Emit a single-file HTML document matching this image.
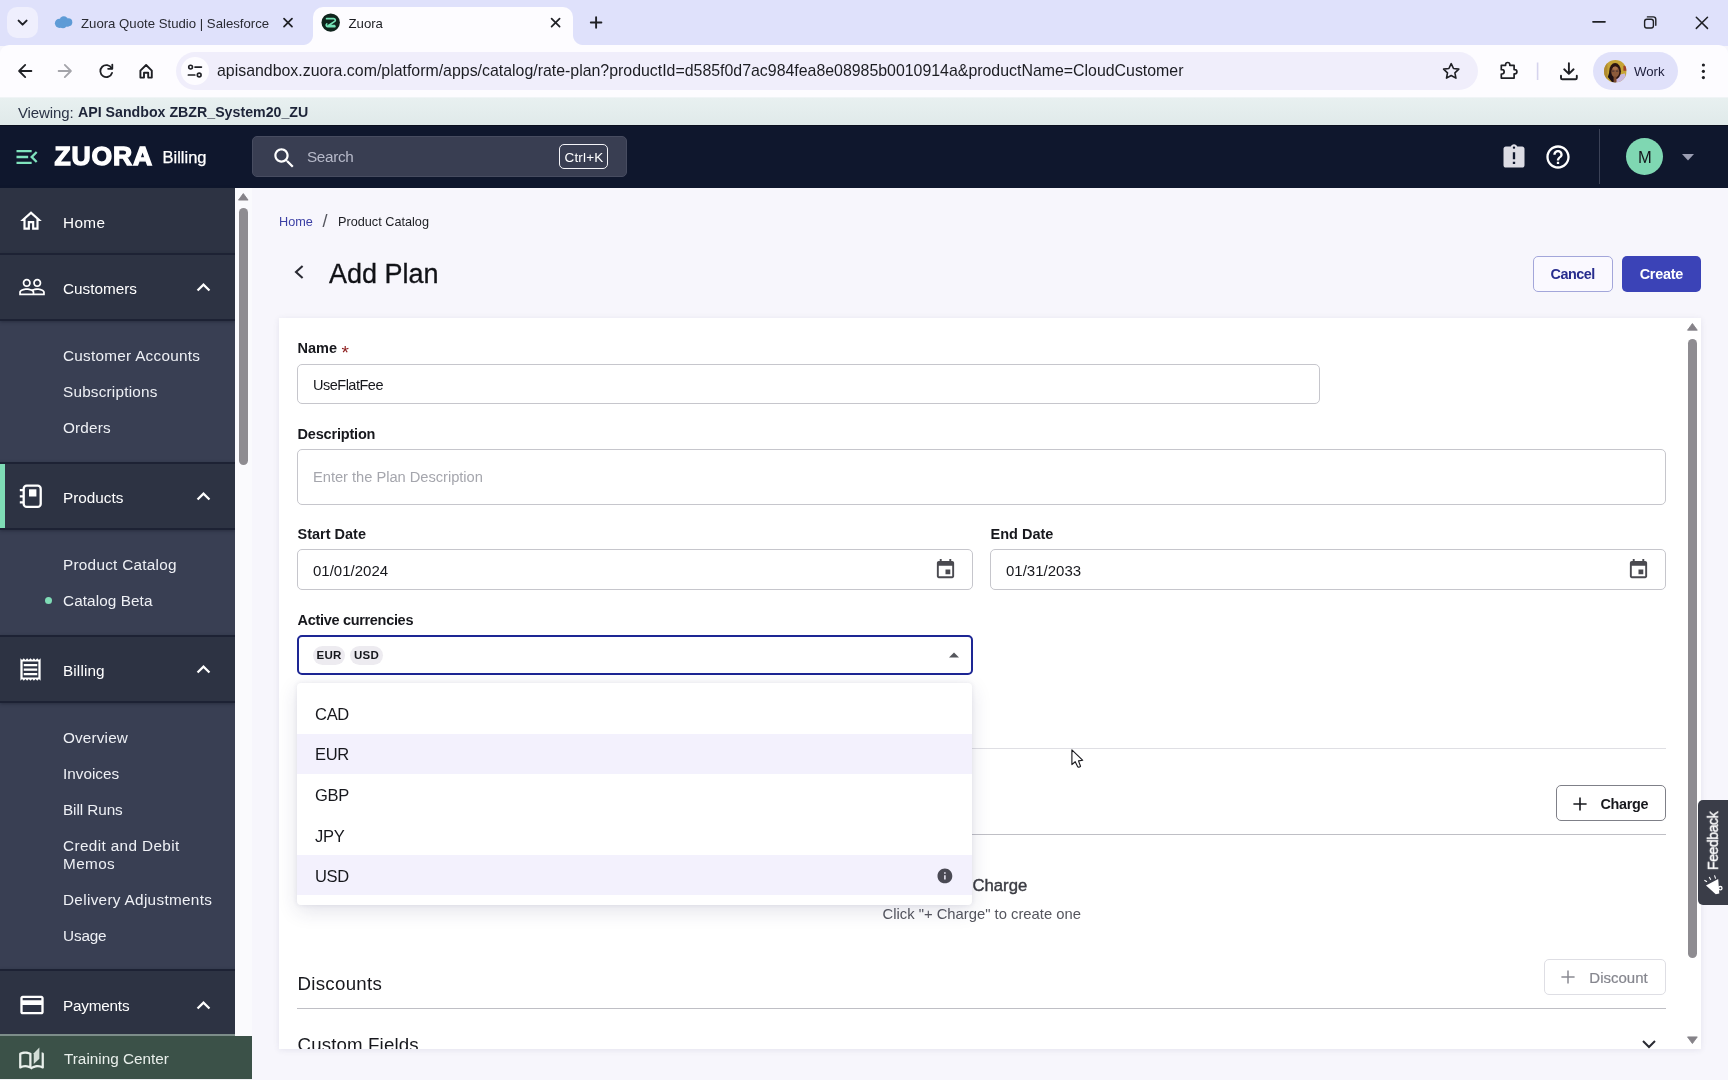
<!DOCTYPE html>
<html lang="en">
<head>
<meta charset="utf-8">
<title>Zuora</title>
<style>
*{box-sizing:border-box;margin:0;padding:0}
html,body{width:1728px;height:1080px;overflow:hidden}
body{position:relative;background:#f7f6fc;will-change:transform;font-family:"Liberation Sans","DejaVu Sans",sans-serif;color:#14151a;font-size:15px}
.abs{position:absolute}
.t{position:absolute;white-space:nowrap;line-height:1}
svg{position:absolute;overflow:visible}
.ic{fill:none;stroke:#1f2025;stroke-width:1.8;stroke-linecap:round;stroke-linejoin:round}
/* ---------- browser chrome ---------- */
#tabbar{left:0;top:0;width:1728px;height:46px;background:#dfe1fb}
#tabsearch{left:7px;top:7px;width:31px;height:31px;border-radius:10px;background:#efeffd}
#tab2{left:313px;top:7px;width:260px;height:39px;background:#fdfcff;border-radius:10px 10px 0 0}
#tab2:before,#tab2:after{content:"";position:absolute;bottom:1px;width:10px;height:10px}
#tab2:before{left:-10px;background:radial-gradient(circle at 0 0,rgba(253,252,255,0) 9.5px,#fdfcff 10.5px)}
#tab2:after{right:-10px;background:radial-gradient(circle at 100% 0,rgba(253,252,255,0) 9.5px,#fdfcff 10.5px)}
#toolbar{left:0;top:45px;width:1728px;height:53px;background:#fdfcff;border-radius:9px 9px 0 0}
#urlbar{left:176px;top:52px;width:1302px;height:38px;border-radius:19px;background:#f0eefb}
#sitechip{left:181px;top:57px;width:28px;height:28px;border-radius:14px;background:#fdfcff}
#profile{left:1593px;top:52px;width:85px;height:38px;border-radius:19px;background:#e0e1fa}
#pavatar{left:1604px;top:60px;width:23px;height:23px;border-radius:50%;background:radial-gradient(circle at 45% 55%,#5a3424 0,#6a4128 28%,#8a5a2c 45%,#b08a3a 62%,#caa648 78%,#7a5a30 100%)}
#viewbar{left:0;top:97px;width:1728px;height:28px;background:linear-gradient(180deg,#e8f0f0 0,#e0eaea 100%);border-top:1px solid #f0f4f6}
/* ---------- app header ---------- */
#hdr{left:0;top:125px;width:1728px;height:63px;background:#0f172d;border-top:1px solid #0a0f1e}
#search{left:252px;top:136px;width:375px;height:41px;border-radius:5px;background:#393e52;border:1px solid #474c60}
#kbd{left:559px;top:144px;width:49px;height:25px;border:1.5px solid #f4f4f8;border-radius:5px}
#hsep{left:1599px;top:129px;width:1px;height:55px;background:#3b4257}
#avatar{left:1626px;top:138px;width:37px;height:37px;border-radius:50%;background:#7fd7b2}
/* ---------- sidebar ---------- */
#side{left:0;top:188px;width:235px;height:892px;background:#393f53}
.sec{position:absolute;left:0;width:235px;background:#2d3343;border-top:2px solid #1d2234;border-bottom:2px solid #1d2234;box-shadow:0 1px 3px rgba(28,33,50,.55)}
.st{color:#fff;font-size:15.3px;left:63px;margin-top:1px}
.si{color:#eef0f5;font-size:15.3px;left:63px;margin-top:1px}
.wi{fill:#fff}
#train{left:0;top:1034px;width:252px;height:45.500px;background:#3b5148;border-top:2px solid #7d8d8a}
/* ---------- main ---------- */
#sbtrack{left:235px;top:188px;width:17px;height:848px;background:#fafafd}
#card{left:279px;top:318px;width:1422px;height:731px;background:#fff;box-shadow:0 1px 6px rgba(70,70,120,.11)}
.lbl{font-weight:bold;font-size:14.5px;color:#17181d}
.inp{position:absolute;border:1px solid #c6c6cc;border-radius:5px;background:#fff}
.val{font-size:15px;color:#17181d}
.hr{position:absolute;height:1px;background:#bfbfc5}
#dd{left:297px;top:683px;width:675px;height:222px;border-radius:4px;background:#fff;box-shadow:0 6px 20px rgba(40,40,90,.13),0 0 5px rgba(40,40,90,.09)}
.opt{position:absolute;left:0;width:675px;height:40px}
.opt.sel{background:#f3f1fd}
.ot{font-size:16.5px;left:18px;color:#17181d;letter-spacing:-.3px}
.chip{position:absolute;height:19px;border-radius:9.5px;background:#edebf0;font-weight:bold;font-size:11.5px;line-height:19.5px;text-align:center;color:#17181d;letter-spacing:.2px}
.btn{position:absolute;border-radius:5px}
#t_view{letter-spacing:-0.12px}#t_logo{letter-spacing:0.88px}#t_search{letter-spacing:-0.34px}#t_kbd{letter-spacing:0.18px}#s_home{letter-spacing:0.37px}#s_ca{letter-spacing:0.27px}#s_sub{letter-spacing:0.21px}#s_ord{letter-spacing:0.16px}#s_pc{letter-spacing:0.27px}#s_cb{letter-spacing:0.09px}#s_bill{letter-spacing:0.13px}#s_ov{letter-spacing:0.16px}#s_br{letter-spacing:-0.08px}#s_cd{letter-spacing:0.38px}#s_mem{letter-spacing:0.39px}#s_da{letter-spacing:0.32px}#s_us{letter-spacing:-0.16px}#s_pay{letter-spacing:-0.21px}#bt_cancel{letter-spacing:-0.50px}#bt_create{letter-spacing:-0.25px}#v_name{letter-spacing:-0.50px}#l_desc{letter-spacing:-0.18px}#v_desc{letter-spacing:-0.03px}#l_cur{letter-spacing:-0.31px}#bt_charge{letter-spacing:-0.33px}#h_disc{letter-spacing:0.28px}#h_cf{letter-spacing:0.14px}#o_cad{letter-spacing:-0.28px}
</style>
</head>
<body>
<!-- ================= browser chrome ================= -->
<div id="tabbar" class="abs"></div>
<div id="tabsearch" class="abs"></div>
<div id="tab2" class="abs"></div>
<div id="toolbar" class="abs"></div>
<div id="urlbar" class="abs"></div>
<div id="sitechip" class="abs"></div>
<div id="profile" class="abs"></div>
<svg width="22.6" height="22.6" viewBox="0 0 22.6 22.6" style="left:1604px;top:59.7px"><defs><clipPath id="pc"><circle cx="11.3" cy="11.3" r="11.3"/></clipPath></defs><g clip-path="url(#pc)"><rect width="22.6" height="22.6" fill="#c6a436"/><rect x="0" y="3" width="3.4" height="16" fill="#b08a30"/><rect x="19.4" y="5.8" width="3.2" height="5" fill="#a0402a"/><path d="M12 15.2L21 13.5 22.6 22.6H11z" fill="#c7b7e0"/><ellipse cx="11.1" cy="11.2" rx="5.9" ry="8.2" fill="#2b1512"/><path d="M5.4 12L3.8 17l4.6 5.6h3.400V14z" fill="#1d1014"/><ellipse cx="11.3" cy="11.900" rx="4" ry="5.300" fill="#8c5a3b"/><ellipse cx="11.200" cy="8.300" rx="2.600" ry="1.800" fill="#a9724c"/><rect x="9.600" y="16.500" width="2.900" height="6" fill="#7c4b30"/><path d="M8 11.100h2.400M12 11.100h2.400" stroke="#3a2a30" stroke-width=".9"/></g></svg>
<div id="viewbar" class="abs"></div>
<svg width="1728" height="100" viewBox="0 0 1728 100" style="left:0;top:0">
  <!-- tab search chevron -->
  <path class="ic" style="stroke-width:2" d="M18.6 20.6l4 4 4-4"/>
  <!-- salesforce cloud -->
  <g fill="#5e9bd6"><circle cx="59.5" cy="23.3" r="4.6"/><circle cx="63.8" cy="20.6" r="4.3"/><circle cx="68.3" cy="22.2" r="4"/><circle cx="63" cy="24.6" r="3.6"/><circle cx="67" cy="23.6" r="3.2"/></g>
  <!-- tab close buttons -->
  <path class="ic" style="stroke-width:1.7" d="M284 18.6l8 8m0-8l-8 8"/>
  <path class="ic" style="stroke-width:1.7" d="M551.6 18.6l8 8m0-8l-8 8"/>
  <!-- zuora favicon -->
  <circle cx="330.7" cy="22.6" r="9.2" fill="#10241d"/>
  <path d="M326.6 18.7h7.2a1.5 1.5 0 0 1 .9 2.7l-6.6 4.3a0 0 0 0 0 0 0h6.5" fill="none" stroke="#74e3b7" stroke-width="1.7" stroke-linecap="round" stroke-linejoin="round"/>
  <path d="M334.9 26.6h-7.3a1.5 1.5 0 0 1-.8-2.7" fill="none" stroke="#74e3b7" stroke-width="1.7" stroke-linecap="round"/>
  <!-- new tab plus -->
  <path class="ic" style="stroke-width:1.9" d="M590.8 22.5h10.6m-5.3-5.3v10.6"/>
  <!-- window controls -->
  <path class="ic" style="stroke-width:1.7" d="M1593 21.8h12"/>
  <rect class="ic" style="stroke-width:1.4" x="1644.6" y="19.2" width="8.8" height="8.8" rx="2.2"/>
  <path class="ic" style="stroke-width:1.4" d="M1647.4 16.9h5.8a2.6 2.6 0 0 1 2.6 2.6v5.8"/>
  <path class="ic" style="stroke-width:1.5" d="M1696.3 17.2l11.2 11.2m0-11.2l-11.2 11.2"/>
  <!-- back / forward -->
  <path class="ic" d="M31.4 71H19.2m6-6.1l-6.1 6.1 6.1 6.1"/>
  <path class="ic" style="stroke:#a4a4aa" d="M58.6 71h12.2m-6-6.1l6.1 6.1-6.1 6.1"/>
  <!-- reload -->
  <path class="ic" d="M111.6 68.2a6 6 0 1 0 .5 4.6"/>
  <path class="ic" d="M112.3 64.6v4.2h-4.2"/>
  <!-- home -->
  <path class="ic" style="stroke-width:1.9" d="M140.4 70.6l5.7-5.6 5.7 5.6v7h-3.6v-4.9h-4.2v4.9h-3.6z"/>
  <!-- tune icon -->
  <circle class="ic" style="stroke-width:1.6" cx="190.6" cy="67.1" r="1.9"/><path class="ic" style="stroke-width:1.7" d="M195 67.1h6.4"/>
  <circle class="ic" style="stroke-width:1.6" cx="199.2" cy="75" r="1.9"/><path class="ic" style="stroke-width:1.7" d="M188.4 75h6.4"/>
  <!-- star -->
  <path class="ic" style="stroke-width:1.6" d="M1451.2 63.6l2.3 4.9 5.3.6-3.9 3.7 1 5.3-4.7-2.6-4.7 2.6 1-5.3-3.9-3.7 5.3-.6z"/>
  <!-- extension puzzle -->
  <path class="ic" style="stroke-width:1.7" d="M1501.3 65.300h4.300v-.700a2.100 2.100 0 0 1 4.200 0v.700h4.300v4.300h.700a2.100 2.100 0 0 1 0 4.200h-.700v4.300h-12.800v-4.100h.700a2.150 2.150 0 0 0 0-4.300h-.700z"/>
  <path d="M1537.600 62.500v17.500" stroke="#d6d4ee" stroke-width="1.6" fill="none"/>
  <!-- download -->
  <path class="ic" style="stroke-width:1.9" d="M1568.900 63.200v10.600m-4.700-4.500l4.700 4.600 4.700-4.600M1561 75.800v2.200a1.300 1.300 0 0 0 1.300 1.300h13.200a1.300 1.300 0 0 0 1.300-1.300v-2.200"/>
  <!-- menu dots -->
  <g fill="#1f2025"><circle cx="1703.400" cy="65" r="1.600"/><circle cx="1703.400" cy="71.300" r="1.600"/><circle cx="1703.400" cy="77.600" r="1.600"/></g>
</svg>
<span class="t" id="t_tab1" style="left:81px;top:17px;font-size:13.2px;color:#2a2b33">Zuora Quote Studio | Salesforce</span>
<span class="t" id="t_tab2" style="left:348.5px;top:17px;font-size:13.2px;color:#1c1d22">Zuora</span>
<span class="t" id="t_url" style="left:217px;top:63.3px;font-size:15.9px;color:#1c1d22">apisandbox.zuora.com/platform/apps/catalog/rate-plan?productId=d585f0d7ac984fea8e08985b0010914a&amp;productName=CloudCustomer</span>
<span class="t" id="t_work" style="left:1634px;top:64.5px;font-size:13.2px;color:#1c1d3a">Work</span>
<span class="t" id="t_view" style="left:18px;top:105px;font-size:15px;color:#2b3346">Viewing:</span>
<span class="t" id="t_viewb" style="left:78px;top:105px;font-size:14.2px;font-weight:bold;color:#1d2438">API Sandbox ZBZR_System20_ZU</span>

<!-- ================= app header ================= -->
<div id="hdr" class="abs"></div>
<div id="search" class="abs"></div>
<div id="kbd" class="abs"></div>
<div id="hsep" class="abs"></div>
<div id="avatar" class="abs"></div>
<svg width="28" height="28" viewBox="0 0 24 24" style="left:13.2px;top:143px"><path fill="#7fe3bd" d="M3 18h13v-2H3v2zm0-5h10v-2H3v2zm0-7v2h13V6H3zm18 9.59L17.42 12 21 8.41 19.59 7l-5 5 5 5L21 15.590z"/></svg>
<svg width="26.500" height="26.500" viewBox="0 0 24 24" style="left:271px;top:144.700px"><path class="wi" d="M15.500 14h-.79l-.28-.27C15.410 12.590 16 11.110 16 9.500 16 5.910 13.090 3 9.500 3S3 5.910 3 9.500 5.910 16 9.500 16c1.610 0 3.090-.59 4.230-1.570l.27.28v.79l5 4.990L20.490 19l-4.990-5zm-6 0C7.010 14 5 11.990 5 9.500S7.010 5 9.500 5 14 7.010 14 9.500 11.990 14 9.500 14z"/></svg>
<svg width="28" height="28" viewBox="0 0 24 24" style="left:1499.500px;top:142.500px"><path fill="#dcdce4" d="M19 3h-4.180C14.400 1.840 13.300 1 12 1c-1.300 0-2.400.84-2.820 2H5c-1.100 0-2 .9-2 2v14c0 1.100.9 2 2 2h14c1.100 0 2-.9 2-2V5c0-1.100-.9-2-2-2zm-6 15h-2v-2h2v2zm0-4h-2V8h2v6zm-1-9c-.55 0-1-.45-1-1s.45-1 1-1 1 .45 1 1-.45 1-1 1z"/></svg>
<svg width="28" height="28" viewBox="0 0 24 24" style="left:1544.400px;top:142.600px"><path class="wi" d="M11 18h2v-2h-2v2zm1-16C6.480 2 2 6.480 2 12s4.480 10 10 10 10-4.480 10-10S17.520 2 12 2zm0 18c-4.410 0-8-3.590-8-8s3.590-8 8-8 8 3.590 8 8-3.590 8-8 8zm0-14c-2.210 0-4 1.790-4 4h2c0-1.100.9-2 2-2s2 .9 2 2c0 2-3 1.750-3 5h2c0-2.250 3-2.500 3-5 0-2.210-1.790-4-4-4z"/></svg>
<svg width="12" height="7" viewBox="0 0 12 7" style="left:1681.600px;top:153.600px"><path fill="#9b9eb2" d="M0 0h12L6 6.600z"/></svg>
<span class="t" id="t_logo" style="left:54.500px;top:143px;font-size:26.500px;font-weight:bold;color:#fff;-webkit-text-stroke:1.350px #fff">ZUORA</span>
<span class="t" id="t_bill" style="left:162.500px;top:149px;font-size:16.500px;color:#fff;-webkit-text-stroke:.25px #fff">Billing</span>
<span class="t" id="t_search" style="left:307px;top:148.600px;font-size:15.3px;color:#b6b9c9">Search</span>
<span class="t" id="t_kbd" style="left:564.500px;top:151px;font-size:13.500px;color:#fff">Ctrl+K</span>
<span class="t" id="t_m" style="left:1638px;top:149px;font-size:16.500px;color:#14151a">M</span>

<!-- ================= sidebar ================= -->
<div id="side" class="abs"></div>
<div class="sec" style="top:188px;height:67px;border-top:0"></div>
<div class="sec" style="top:253px;height:68px"></div>
<div class="sec" style="top:462px;height:68px"></div>
<div class="sec" style="top:635px;height:68px"></div>
<div class="sec" style="top:969px;height:68px;border-bottom:0"></div>
<div class="abs" style="left:0;top:464px;width:4.500px;height:64px;background:#7fdcb6"></div>
<!-- sidebar icons -->
<svg width="26" height="26" viewBox="0 0 24 24" style="left:18.400px;top:208.400px"><path class="wi" d="M12 5.690l5 4.500V18h-2v-6H9v6H7v-7.810l5-4.500M12 3L2 12h3v8h6v-6h2v6h6v-8h3L12 3z"/></svg>
<svg width="28" height="28" viewBox="0 0 24 24" style="left:17.600px;top:273.200px"><path class="wi" d="M16.500 13c-1.200 0-3.070.34-4.500 1-1.430-.67-3.300-1-4.500-1C5.330 13 1 14.080 1 16.250V19h22v-2.750c0-2.170-4.330-3.250-6.500-3.250zm-4 4.500h-10v-1.250c0-.54 2.560-1.750 5-1.750s5 1.210 5 1.750v1.250zm9 0H14v-1.250c0-.46-.2-.86-.52-1.220.88-.3 1.960-.53 3.020-.53 2.440 0 5 1.210 5 1.750v1.250zM7.500 12c1.930 0 3.500-1.570 3.500-3.500S9.430 5 7.500 5 4 6.570 4 8.500 5.570 12 7.500 12zm0-5.500c1.100 0 2 .9 2 2s-.9 2-2 2-2-.9-2-2 .9-2 2-2zm9 5.500c1.930 0 3.500-1.570 3.500-3.500S18.430 5 16.500 5 13 6.570 13 8.500s1.570 3.500 3.500 3.500zm0-5.500c1.100 0 2 .9 2 2s-.9 2-2 2-2-.9-2-2 .9-2 2-2z"/></svg>
<svg width="26" height="28" viewBox="0 0 26 28" style="left:18px;top:482px"><rect x="5.700" y="3.700" width="17" height="21.200" rx="3" fill="none" stroke="#fff" stroke-width="2.300"/><rect x="11" y="7.300" width="7.400" height="7.200" fill="#fff"/><path d="M1.800 8.200h3.200M1.800 14.300h3.200M1.800 20.400h3.200" stroke="#fff" stroke-width="2.300" fill="none"/></svg>
<svg width="27" height="27" viewBox="0 0 24 24" style="left:17.300px;top:656.200px"><path class="wi" d="M19.500 3.500L18 2l-1.500 1.500L15 2l-1.500 1.500L12 2l-1.500 1.500L9 2 7.500 3.500 6 2 4.500 3.500 3 2v20l1.500-1.500L6 22l1.500-1.500L9 22l1.500-1.500L12 22l1.500-1.500L15 22l1.500-1.500L18 22l1.500-1.500L21 22V2l-1.500 1.500zM19 19.090H5V4.910h14v14.180zM6 15h12v2H6zm0-4h12v2H6zm0-4h12v2H6z"/></svg>
<svg width="28" height="28" viewBox="0 0 24 24" style="left:17.500px;top:991.300px"><path class="wi" d="M20 4H4c-1.110 0-1.990.89-1.990 2L2 18c0 1.110.89 2 2 2h16c1.110 0 2-.89 2-2V6c0-1.110-.89-2-2-2zm0 14H4v-6h16v6zm0-10H4V6h16v2z"/></svg>
<!-- chevrons -->
<svg width="27" height="27" viewBox="0 0 24 24" style="left:190.200px;top:274px"><path class="wi" d="M12 8l-6 6 1.410 1.410L12 10.830l4.590 4.580L18 14z"/></svg>
<svg width="27" height="27" viewBox="0 0 24 24" style="left:190.200px;top:483px"><path class="wi" d="M12 8l-6 6 1.410 1.410L12 10.830l4.590 4.580L18 14z"/></svg>
<svg width="27" height="27" viewBox="0 0 24 24" style="left:190.200px;top:656px"><path class="wi" d="M12 8l-6 6 1.410 1.410L12 10.830l4.590 4.580L18 14z"/></svg>
<svg width="27" height="27" viewBox="0 0 24 24" style="left:190.200px;top:992px"><path class="wi" d="M12 8l-6 6 1.410 1.410L12 10.830l4.590 4.580L18 14z"/></svg>
<span class="t st" id="s_home" style="top:214px">Home</span>
<span class="t st" id="s_cust" style="top:279.500px">Customers</span>
<span class="t si" id="s_ca" style="top:347px">Customer Accounts</span>
<span class="t si" id="s_sub" style="top:383px">Subscriptions</span>
<span class="t si" id="s_ord" style="top:419px">Orders</span>
<span class="t st" id="s_prod" style="top:488.500px">Products</span>
<span class="t si" id="s_pc" style="top:556px">Product Catalog</span>
<span class="t si" id="s_cb" style="top:592px">Catalog Beta</span>
<div class="abs" style="left:44.700px;top:597px;width:7px;height:7px;border-radius:50%;background:#7fdcb6"></div>
<span class="t st" id="s_bill" style="top:661.500px">Billing</span>
<span class="t si" id="s_ov" style="top:729px">Overview</span>
<span class="t si" id="s_inv" style="top:765px">Invoices</span>
<span class="t si" id="s_br" style="top:801px">Bill Runs</span>
<span class="t si" id="s_cd" style="top:837px">Credit and Debit</span>
<span class="t si" id="s_mem" style="top:855px">Memos</span>
<span class="t si" id="s_da" style="top:891px">Delivery Adjustments</span>
<span class="t si" id="s_us" style="top:927px">Usage</span>
<span class="t st" id="s_pay" style="top:997px">Payments</span>
<div id="train" class="abs"></div>
<div class="abs" style="left:0;top:1079.300px;width:252px;height:1px;background:#eef0f2"></div>
<svg width="27" height="27" viewBox="0 0 24 24" style="left:18px;top:1046.800px"><path fill="#e9efeb" d="M22.470 5.200c-.47-.24-.96-.44-1.470-.61v12.030c-1.140-.41-2.310-.62-3.500-.62-1.900 0-3.780.54-5.500 1.580V5.480C10.380 4.550 8.510 4 6.500 4c-1.790 0-3.480.44-4.970 1.200-.33.160-.53.510-.53.880v12.080c0 .58.470.99 1 .99.160 0 .32-.04.480-.12C3.690 18.400 5.050 18 6.500 18c2.070 0 3.980.82 5.500 2 1.520-1.180 3.430-2 5.500-2 1.450 0 2.810.4 4.020 1.040.16.080.32.120.48.120.52 0 1-.41 1-.99V6.080c0-.37-.2-.72-.53-.88zM10 16.620C8.860 16.210 7.690 16 6.500 16s-2.360.21-3.500.62V6.710C4.110 6.240 5.280 6 6.500 6c1.200 0 2.390.25 3.500.72v9.900z"/><path fill="#d3ddd7" d="M19 .5l-5 5V15l5-4.500V.5z"/></svg>
<span class="t st" id="s_tc" style="top:1050px;left:64px;color:#e9efeb">Training Center</span>

<!-- ================= main ================= -->
<div id="sbtrack" class="abs"></div>
<svg width="10.600" height="8" viewBox="0 0 12 9" style="left:238.100px;top:192.800px"><path fill="#858288" d="M6 .6L11.400 8H.6z" stroke="#858288" stroke-width="1" stroke-linejoin="round"/></svg>
<div class="abs" style="left:239px;top:208px;width:9px;height:257px;border-radius:4.500px;background:#8e8c91"></div>
<span class="t" id="b_home" style="left:279px;top:215.500px;font-size:12.700px;color:#3b3fa4">Home</span>
<span class="t" id="b_sl" style="left:322.500px;top:212px;font-size:18px;color:#55565e">/</span>
<span class="t" id="b_pc" style="left:338px;top:215.500px;font-size:12.700px;color:#1c1d22">Product Catalog</span>
<svg width="12" height="16" viewBox="0 0 12 16" style="left:293px;top:263.500px"><path d="M9.600 2L3 8l6.600 6" fill="none" stroke="#2a2b33" stroke-width="2.100" stroke-linejoin="miter"/></svg>
<span class="t" id="h_add" style="left:329px;top:260.500px;font-size:27px;color:#111217;-webkit-text-stroke:.3px #111217">Add Plan</span>
<div class="btn" style="left:1532.500px;top:255.500px;width:80.500px;height:36.500px;border:1px solid #a3a6da;background:#faf9ff"></div>
<span class="t" id="bt_cancel" style="left:1550.500px;top:266.500px;font-size:14.400px;color:#272d8e;font-weight:bold">Cancel</span>
<div class="btn" style="left:1622px;top:255.500px;width:79px;height:36px;background:#3b43b7"></div>
<span class="t" id="bt_create" style="left:1639.700px;top:266.500px;font-size:14.400px;color:#fff;font-weight:bold">Create</span>

<div id="card" class="abs"></div>
<!-- card scrollbar -->
<svg width="10.800" height="8.100" viewBox="0 0 12 9" style="left:1687px;top:323.300px"><path fill="#858288" d="M6 .6L11.400 8H.6z" stroke="#858288" stroke-width="1" stroke-linejoin="round"/></svg>
<div class="abs" style="left:1688px;top:339px;width:9px;height:619px;border-radius:4.500px;background:#8e8c91"></div>
<svg width="10.800" height="8.100" viewBox="0 0 12 9" style="left:1687.200px;top:1036px"><path fill="#858288" d="M6 8.400L11.400 1H.6z" stroke="#858288" stroke-width="1" stroke-linejoin="round"/></svg>

<span class="t lbl" id="l_name" style="left:297.500px;top:341px">Name</span>
<span class="t" id="l_star" style="left:341.500px;top:343px;font-size:19px;color:#8b1a1a">*</span>
<div class="inp" style="left:297px;top:364px;width:1023px;height:40px"></div>
<span class="t val" id="v_name" style="left:313px;top:378px;font-size:14.500px">UseFlatFee</span>
<span class="t lbl" id="l_desc" style="left:297.500px;top:426.500px">Description</span>
<div class="inp" style="left:297px;top:449px;width:1369px;height:55.500px"></div>
<span class="t val" id="v_desc" style="left:313px;top:470px;color:#a5a6ad;font-size:14.700px">Enter the Plan Description</span>
<span class="t lbl" id="l_start" style="left:297.500px;top:527px">Start Date</span>
<div class="inp" style="left:297px;top:549px;width:675.500px;height:41px"></div>
<span class="t val" id="v_start" style="left:313px;top:562.500px">01/01/2024</span>
<svg width="23" height="23" viewBox="0 0 24 24" style="left:933.900px;top:558px"><path fill="#4a4a50" d="M17 12h-5v5h5v-5zM16 1v2H8V1H6v2H5c-1.110 0-1.990.9-1.990 2L3 19c0 1.100.89 2 2 2h14c1.100 0 2-.9 2-2V5c0-1.100-.9-2-2-2h-1V1h-2zm3 18H5V8h14v11z"/></svg>
<span class="t lbl" id="l_end" style="left:990.500px;top:527px">End Date</span>
<div class="inp" style="left:990px;top:549px;width:676px;height:41px"></div>
<span class="t val" id="v_end" style="left:1006px;top:562.500px">01/31/2033</span>
<svg width="23" height="23" viewBox="0 0 24 24" style="left:1627.400px;top:558px"><path fill="#4a4a50" d="M17 12h-5v5h5v-5zM16 1v2H8V1H6v2H5c-1.110 0-1.990.9-1.990 2L3 19c0 1.100.89 2 2 2h14c1.100 0 2-.9 2-2V5c0-1.100-.9-2-2-2h-1V1h-2zm3 18H5V8h14v11z"/></svg>
<span class="t lbl" id="l_cur" style="left:297.500px;top:612.800px">Active currencies</span>
<div class="inp" style="left:297px;top:635px;width:675.500px;height:40px;border:2px solid #1d2694"></div>
<div class="chip" id="c_eur" style="left:313px;top:645.700px;width:32px">EUR</div>
<div class="chip" id="c_usd" style="left:350px;top:645.700px;width:33px">USD</div>
<svg width="10" height="6" viewBox="0 0 10 6" style="left:948.700px;top:652.400px"><path fill="#55565c" d="M0 5.500h10L5 .5z"/></svg>

<div class="hr" style="left:972px;top:748px;width:694px;background:#dfdfe4"></div>
<div class="btn" style="left:1555.500px;top:785px;width:110.500px;height:36px;border:1px solid #7f8088;background:#fff"></div>
<svg width="14" height="14" viewBox="0 0 14 14" style="left:1572.800px;top:796.600px"><path d="M7 .4v13.200M.4 7h13.200" stroke="#17181d" stroke-width="1.600" fill="none"/></svg>
<span class="t" id="bt_charge" style="left:1600.500px;top:796.500px;font-size:14.400px;color:#17181d;font-weight:bold">Charge</span>
<div class="hr" style="left:972px;top:834px;width:694px"></div>
<span class="t" id="h_charge" style="left:972.500px;top:877.500px;font-size:16.700px;color:#3a3b42;-webkit-text-stroke:.4px #3a3b42">Charge</span>
<span class="t" id="p_click" style="left:882.500px;top:906.800px;font-size:14.800px;color:#55565e">Click "+ Charge" to create one</span>
<span class="t" id="h_disc" style="left:297.500px;top:975.300px;font-size:18.700px;color:#17181d">Discounts</span>
<div class="btn" style="left:1544px;top:959px;width:122px;height:35.500px;border:1px solid #dedee4;background:#fff"></div>
<svg width="14" height="14" viewBox="0 0 14 14" style="left:1561.400px;top:970px"><path d="M7 .4v13.200M.4 7h13.200" stroke="#8a8b92" stroke-width="1.500" fill="none"/></svg>
<span class="t" id="bt_disc" style="left:1589.300px;top:970px;font-size:15px;color:#85868e;-webkit-text-stroke:.2px #85868e">Discount</span>
<div class="hr" style="left:297px;top:1008px;width:1369px"></div>
<div class="abs" style="left:279px;top:1020px;width:1421px;height:29px;overflow:hidden">
  <span class="t" id="h_cf" style="left:18.500px;top:15.800px;font-size:18.700px;color:#17181d">Custom Fields</span>
  <svg width="14" height="9" viewBox="0 0 14 9" style="left:1363.300px;top:19.600px"><path d="M1 1l6 6 6-6" fill="none" stroke="#2a2b33" stroke-width="2"/></svg>
</div>

<!-- dropdown -->
<div id="dd" class="abs">
  <div class="opt" style="top:11px"><span class="t ot" id="o_cad" style="top:12px">CAD</span></div>
  <div class="opt sel" style="top:51px"><span class="t ot" id="o_eur" style="top:12.200px">EUR</span></div>
  <div class="opt" style="top:92px"><span class="t ot" id="o_gbp" style="top:12.200px">GBP</span></div>
  <div class="opt" style="top:132px"><span class="t ot" id="o_jpy" style="top:12.500px">JPY</span></div>
  <div class="opt sel" style="top:172px"><span class="t ot" id="o_usd" style="top:13.200px">USD</span></div>
</div>
<svg width="17.800" height="17.800" viewBox="0 0 24 24" style="left:935.900px;top:866.500px"><path fill="#4a4a54" d="M12 2C6.480 2 2 6.480 2 12s4.480 10 10 10 10-4.480 10-10S17.520 2 12 2zm1 15h-2v-6h2v6zm0-8h-2V7h2v2z"/></svg>

<!-- mouse cursor -->
<svg width="14" height="21" viewBox="0 0 14 21" style="left:1071px;top:749px"><path d="M.9 .9v14.700l3.300-2.900 2.500 5.100q1.500 1 2.800-.5L7.500 11.900l4.300-.6z" fill="#fff" stroke="#1c1c21" stroke-width="1.150" stroke-linejoin="round"/></svg>

<!-- feedback tab -->
<div class="abs" style="left:1698px;top:800px;width:30px;height:105px;background:#3a3d48;border-radius:5px 0 0 5px"></div>
<span class="t" id="fb" style="left:1713px;top:840.500px;font-size:14.200px;color:#fff;letter-spacing:-.5px;will-change:transform;-webkit-text-stroke:.35px #fff;transform:translate(-50%,-50%) rotate(-90deg)">Feedback</span>
<svg width="24" height="24" viewBox="0 0 24 24" style="left:1700px;top:872px"><path fill="#fff" d="M6 13.500L18.200 7.100l1.100 14.400-3.500.8z"/><circle cx="20.300" cy="16.200" r="1.700" fill="none" stroke="#fff" stroke-width="1.300"/><path d="M4.400 8.200l2.600 1.600M9.200 5l1.600 2.700M14.500 3.400l1.100 3.200" stroke="#fff" stroke-width="1.100" fill="none"/></svg>
</body>
</html>
